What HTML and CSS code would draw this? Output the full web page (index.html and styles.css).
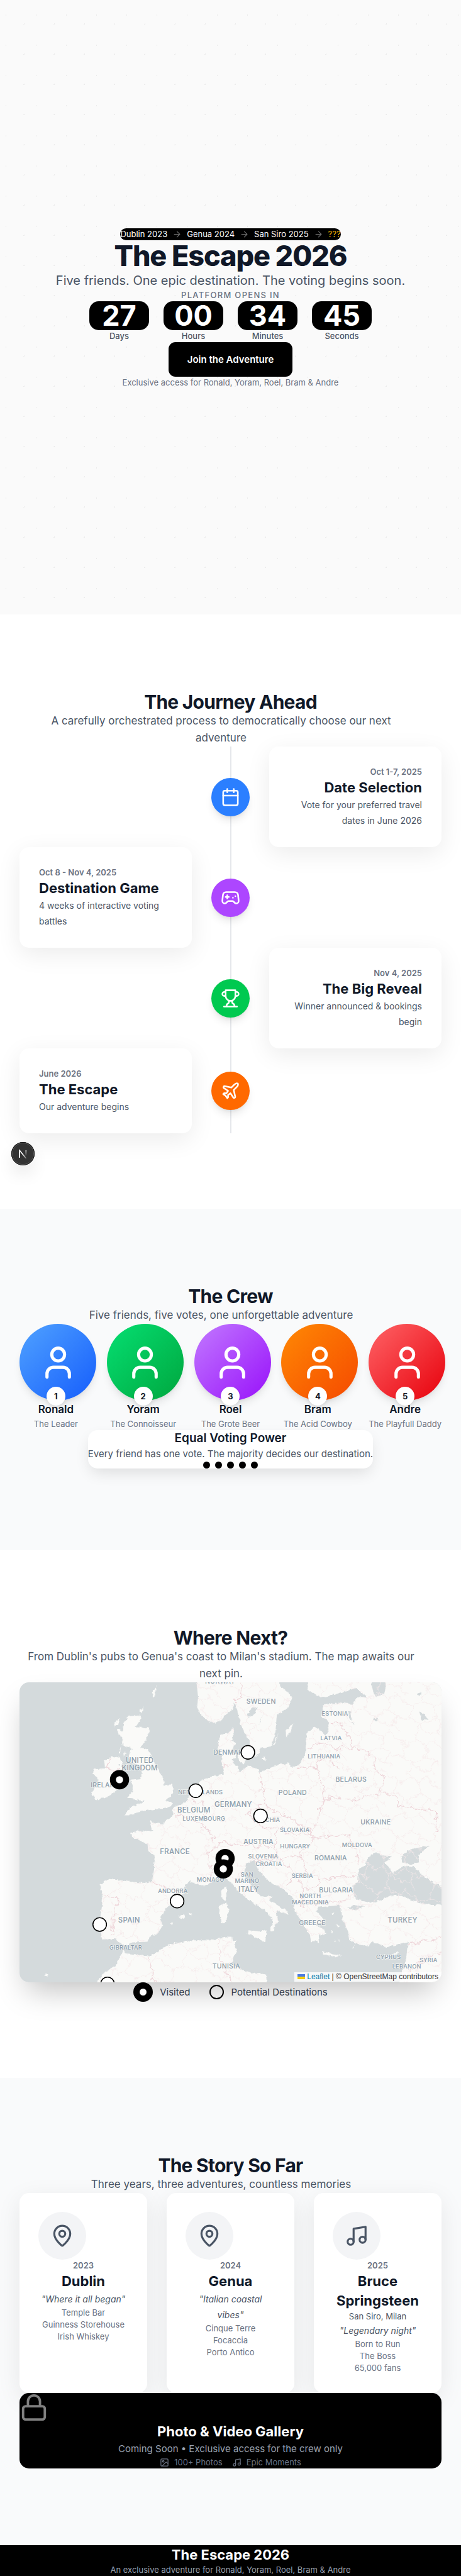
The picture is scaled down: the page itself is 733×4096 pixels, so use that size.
FILE: index.html
```html
<!DOCTYPE html>
<html lang="en">
<head>
<meta charset="utf-8">
<meta name="viewport" content="width=device-width, initial-scale=1">
<title>The Escape 2026</title>
<link rel="stylesheet" href="styles.css">
</head>
<body>
<svg class="sprite" aria-hidden="true">
  <symbol id="i-arrow" viewBox="0 0 24 24"><path d="M5 12h14M12 5l7 7-7 7"/></symbol>
  <symbol id="i-calendar" viewBox="0 0 24 24"><path d="M8 2v4M16 2v4M3 10h18"/><rect x="3" y="4" width="18" height="18" rx="2"/></symbol>
  <symbol id="i-game" viewBox="0 0 24 24"><path d="M6 11h4M8 9v4M15 12h.01M18 10h.01"/><path d="M17.32 5H6.68a4 4 0 0 0-3.978 3.59c-.006.052-.01.101-.017.152C2.604 9.416 2 14.456 2 16a3 3 0 0 0 3 3c1 0 1.5-.5 2-1l1.414-1.414A2 2 0 0 1 9.828 16h4.344a2 2 0 0 1 1.414.586L17 18c.5.5 1 1 2 1a3 3 0 0 0 3-3c0-1.545-.604-6.584-.685-7.258-.007-.05-.011-.1-.017-.151A4 4 0 0 0 17.32 5z"/></symbol>
  <symbol id="i-trophy" viewBox="0 0 24 24"><path d="M6 9H4.5a2.5 2.5 0 0 1 0-5H6M18 9h1.5a2.5 2.5 0 0 0 0-5H18M4 22h16M10 14.66V17c0 .55-.47.98-.97 1.21C7.85 18.75 7 20.24 7 22M14 14.66V17c0 .55.47.98.97 1.21C16.15 18.75 17 20.24 17 22M18 2H6v7a6 6 0 0 0 12 0V2Z"/></symbol>
  <symbol id="i-plane" viewBox="0 0 24 24"><path d="M17.8 19.2 16 11l3.5-3.5C21 6 21.5 4 21 3c-1-.5-3 0-4.5 1.5L13 8 4.8 6.2c-.5-.1-.9.1-1.1.5l-.3.5c-.2.5-.1 1 .3 1.3L9 12l-2 3H4l-1 1 3 2 2 3 1-1v-3l3-2 3.5 5.3c.3.4.8.5 1.3.3l.5-.2c.4-.3.6-.7.5-1.2z"/></symbol>
  <symbol id="i-user" viewBox="0 0 24 24"><path d="M19 21v-2a4 4 0 0 0-4-4H9a4 4 0 0 0-4 4v2"/><circle cx="12" cy="7" r="4"/></symbol>
  <symbol id="i-pin" viewBox="0 0 24 24"><path d="M20 10c0 4.993-5.539 10.193-7.399 11.799a1 1 0 0 1-1.202 0C9.539 20.193 4 14.993 4 10a8 8 0 0 1 16 0"/><circle cx="12" cy="10" r="3"/></symbol>
  <symbol id="i-music" viewBox="0 0 24 24"><path d="M9 18V5l12-2v13"/><circle cx="6" cy="18" r="3"/><circle cx="18" cy="16" r="3"/></symbol>
  <symbol id="i-lock" viewBox="0 0 24 24"><rect x="3" y="11" width="18" height="11" rx="2"/><path d="M7 11V7a5 5 0 0 1 10 0v4"/></symbol>
  <symbol id="i-image" viewBox="0 0 24 24"><rect x="3" y="3" width="18" height="18" rx="2"/><circle cx="9" cy="9" r="2"/><path d="m21 15-3.086-3.086a2 2 0 0 0-2.828 0L6 21"/></symbol>
</svg>

<main>
<section class="hero">
  <div class="trail">
    <span>Dublin 2023</span><svg class="icon trail-arrow"><use href="#i-arrow"/></svg>
    <span>Genua 2024</span><svg class="icon trail-arrow"><use href="#i-arrow"/></svg>
    <span>San Siro 2025</span><svg class="icon trail-arrow"><use href="#i-arrow"/></svg>
    <span class="trail-next">???</span>
  </div>
  <h1 class="hero-title">The Escape 2026</h1>
  <p class="hero-lead">Five friends. One epic destination. The voting begins soon.</p>
  <p class="overline">Platform opens in</p>
  <div class="countdown">
    <div class="unit"><div class="unit-value">27</div><div class="unit-label">Days</div></div>
    <div class="unit"><div class="unit-value">00</div><div class="unit-label">Hours</div></div>
    <div class="unit"><div class="unit-value">34</div><div class="unit-label">Minutes</div></div>
    <div class="unit"><div class="unit-value">45</div><div class="unit-label">Seconds</div></div>
  </div>
  <button class="cta" type="button">Join the Adventure</button>
  <p class="hero-note">Exclusive access for Ronald, Yoram, Roel, Bram &amp; Andre</p>
</section>

<section class="section journey">
  <h2 class="section-title">The Journey Ahead</h2>
  <p class="section-lead">A carefully orchestrated process to democratically choose our next <br>adventure</p>
  <ol class="timeline">
    <li class="step step-right">
      <div class="step-dot blue"><svg class="icon"><use href="#i-calendar"/></svg></div>
      <article class="step-card"><p class="step-date">Oct 1-7, 2025</p><h3 class="card-title">Date Selection</h3><p class="step-text">Vote for your preferred travel dates in June 2026</p></article>
    </li>
    <li class="step">
      <article class="step-card"><p class="step-date">Oct 8 - Nov 4, 2025</p><h3 class="card-title">Destination Game</h3><p class="step-text">4 weeks of interactive voting <br>battles</p></article>
      <div class="step-dot purple"><svg class="icon"><use href="#i-game"/></svg></div>
    </li>
    <li class="step step-right">
      <div class="step-dot green"><svg class="icon"><use href="#i-trophy"/></svg></div>
      <article class="step-card"><p class="step-date">Nov 4, 2025</p><h3 class="card-title">The Big Reveal</h3><p class="step-text">Winner announced &amp; bookings <br>begin</p></article>
    </li>
    <li class="step">
      <article class="step-card"><p class="step-date">June 2026</p><h3 class="card-title">The Escape</h3><p class="step-text">Our adventure begins</p></article>
      <div class="step-dot orange"><svg class="icon"><use href="#i-plane"/></svg></div>
    </li>
  </ol>
  <button class="dev-badge" type="button" aria-label="Open developer tools">
    <svg viewBox="0 0 40 40" width="37" height="37" fill="none">
      <defs>
        <linearGradient id="n-diag" gradientUnits="userSpaceOnUse" x1="20" y1="20" x2="27" y2="28"><stop stop-color="#fff"/><stop offset=".7" stop-color="#fff" stop-opacity=".5"/><stop offset="1" stop-color="#fff" stop-opacity="0"/></linearGradient>
        <linearGradient id="n-stem" gradientUnits="userSpaceOnUse" x1="25" y1="13" x2="25" y2="24"><stop stop-color="#fff"/><stop offset="1" stop-color="#fff" stop-opacity="0"/></linearGradient>
      </defs>
      <path d="M14.3 26V14.2l11.8 14.6" stroke="url(#n-diag)" stroke-width="1.7"/>
      <path d="M14.3 27V14" stroke="#fff" stroke-width="1.7"/>
      <path d="M25.2 14v11" stroke="url(#n-stem)" stroke-width="1.7"/>
    </svg>
  </button>
</section>

<section class="section crew">
  <h2 class="section-title">The Crew</h2>
  <p class="section-lead">Five friends, five votes, one unforgettable adventure</p>
  <ul class="crew-grid">
    <li class="member"><div class="avatar"><div class="avatar-disc g-blue"><svg class="icon"><use href="#i-user"/></svg></div><span class="rank">1</span></div><h3 class="member-name">Ronald</h3><p class="member-role">The Leader</p></li>
    <li class="member"><div class="avatar"><div class="avatar-disc g-green"><svg class="icon"><use href="#i-user"/></svg></div><span class="rank">2</span></div><h3 class="member-name">Yoram</h3><p class="member-role">The Connoisseur</p></li>
    <li class="member"><div class="avatar"><div class="avatar-disc g-purple"><svg class="icon"><use href="#i-user"/></svg></div><span class="rank">3</span></div><h3 class="member-name">Roel</h3><p class="member-role">The Grote Beer</p></li>
    <li class="member"><div class="avatar"><div class="avatar-disc g-orange"><svg class="icon"><use href="#i-user"/></svg></div><span class="rank">4</span></div><h3 class="member-name">Bram</h3><p class="member-role">The Acid Cowboy</p></li>
    <li class="member"><div class="avatar"><div class="avatar-disc g-red"><svg class="icon"><use href="#i-user"/></svg></div><span class="rank">5</span></div><h3 class="member-name">Andre</h3><p class="member-role">The Playfull Daddy</p></li>
  </ul>
  <div class="power">
    <h3 class="power-title">Equal Voting Power</h3>
    <p class="power-text">Every friend has one vote. The majority decides our destination.</p>
    <div class="power-dots"><i></i><i></i><i></i><i></i><i></i></div>
  </div>
</section>

<section class="section where">
  <h2 class="section-title">Where Next?</h2>
  <p class="section-lead">From Dublin's pubs to Genua's coast to Milan's stadium. The map awaits our <br>next pin.</p>
  <div class="map">
    <svg class="map-canvas" viewBox="96 335 2112 1500" preserveAspectRatio="xMidYMid slice" role="img" aria-label="Map of Europe">
      <defs>
        <filter id="rough" x="-5%" y="-5%" width="110%" height="110%"><feTurbulence type="fractalNoise" baseFrequency=".06" numOctaves="3" seed="4"/><feDisplacementMap in="SourceGraphic" scale="16" xChannelSelector="R" yChannelSelector="G"/></filter>
        <filter id="rough-lines" x="-5%" y="-5%" width="110%" height="110%"><feTurbulence type="fractalNoise" baseFrequency=".03" numOctaves="4" seed="9"/><feDisplacementMap in="SourceGraphic" scale="46" xChannelSelector="R" yChannelSelector="G"/></filter>
        <pattern id="regions" width="230" height="190" patternUnits="userSpaceOnUse" patternTransform="rotate(11)">
          <path d="M0 40 50 55 90 20 80 0M90 20 150 40 180 10 230 40M50 55 40 110 0 130M40 110 95 140 80 190M150 40 160 95 95 140M160 95 205 110 230 130M205 110 190 160 230 190M190 160 130 165 95 140M180 10 180 0"/>
        </pattern>
        <clipPath id="land-clip">
          <path d="M980 335 990 410 985 460 1005 495 1035 528 1065 538 1095 530 1120 505 1165 468 1172 432 1190 490 1203 545 1225 590 1246 628 1250 655 1235 690 1275 705 1295 690 1300 665 1355 655 1375 600 1380 545 1383 500 1440 462 1458 410 1430 375 1400 355 1398 335Z"/>
          <path d="M1540 335V372L1580 400 1600 410 1660 400 1740 375 1785 365 1805 385 1840 410 1805 405 1780 415 1765 445 1690 435 1615 450 1610 470 1625 482 1600 508 1640 522 1642 580 1625 600 1595 570 1570 558 1540 580 1530 610 1528 660 1525 700 1510 725 1485 755 1460 762 1440 738 1400 745 1360 760 1295 788 1290 770 1240 752 1200 785 1188 762 1168 735 1150 700 1165 665 1180 640 1160 625 1170 575 1165 560 1140 590 1105 597 1090 630 1090 665 1110 705 1105 730 1118 770 1118 795 1055 805 1000 830 975 850 955 890 930 935 865 960 862 1005 820 1032 815 1043 770 1040 747 1024 755 1045 762 1075 730 1080 690 1078 650 1088 660 1110 700 1125 735 1145 742 1180 772 1200 770 1270 760 1330 720 1338 650 1332 560 1320 540 1318 498 1345 512 1405 510 1450 500 1515 485 1550 505 1580 508 1620 580 1618 600 1645 640 1648 665 1635 735 1632 755 1600 783 1597 815 1550 800 1520 830 1465 870 1430 920 1390 920 1360 945 1330 985 1345 1020 1352 1060 1335 1100 1305 1130 1315 1160 1340 1190 1380 1240 1420 1285 1450 1325 1475 1355 1510 1365 1540 1345 1580 1365 1575 1375 1545 1395 1530 1380 1500 1385 1475 1438 1498 1437 1480 1380 1445 1345 1425 1360 1405 1305 1405 1270 1370 1240 1330 1220 1290 1230 1240 1270 1225 1285 1255 1300 1280 1330 1320 1380 1350 1420 1370 1470 1420 1470 1470 1495 1510 1525 1560 1550 1600 1555 1635 1580 1625 1595 1640 1590 1600 1630 1590 1610 1565 1580 1550 1590 1535 1625 1545 1610 1510 1580 1480 1590 1460 1640 1455 1695 1450 1705 1470 1712 1520 1725 1550 1740 1580 1745 1620 1790 1645 1840 1655 1860 1630 1930 1660 2000 1645 2040 1635 2035 1670 2030 1720 2010 1785 1990 1850H2230V320Z"/>
          <path d="M485 1850 510 1795 575 1755 600 1710 615 1675 630 1690 680 1695 745 1705 790 1680 850 1645 960 1625 1050 1625 1130 1610 1160 1610 1165 1630 1185 1620 1170 1650 1185 1680 1165 1715 1160 1740 1200 1770 1265 1790 1330 1795 1335 1850Z"/>
        </clipPath>
      </defs>
      <rect class="sea" x="60" y="300" width="2200" height="1600"/>
      <g class="land" filter="url(#rough)">
        <path d="M980 315 990 410 985 460 1005 495 1035 528 1065 538 1095 530 1120 505 1165 468 1172 432 1190 490 1203 545 1225 590 1246 628 1250 655 1235 690 1275 705 1295 690 1300 665 1355 655 1375 600 1380 545 1383 500 1440 462 1458 410 1430 375 1400 355 1398 315Z"/>
        <path d="M1540 315V372L1580 400 1600 410 1660 400 1740 375 1785 365 1805 385 1840 410 1805 405 1780 415 1765 445 1690 435 1615 450 1610 470 1625 482 1600 508 1640 522 1642 580 1625 600 1595 570 1570 558 1540 580 1530 610 1528 660 1525 700 1510 725 1485 755 1460 762 1440 738 1400 745 1360 760 1295 788 1290 770 1240 752 1200 785 1188 762 1168 735 1150 700 1165 665 1180 640 1160 625 1170 575 1165 560 1140 590 1105 597 1090 630 1090 665 1110 705 1105 730 1118 770 1118 795 1055 805 1000 830 975 850 955 890 930 935 865 960 862 1005 820 1032 815 1043 770 1040 747 1024 755 1045 762 1075 730 1080 690 1078 650 1088 660 1110 700 1125 735 1145 742 1180 772 1200 770 1270 760 1330 720 1338 650 1332 560 1320 540 1318 498 1345 512 1405 510 1450 500 1515 485 1550 505 1580 508 1620 580 1618 600 1645 640 1648 665 1635 735 1632 755 1600 783 1597 815 1550 800 1520 830 1465 870 1430 920 1390 920 1360 945 1330 985 1345 1020 1352 1060 1335 1100 1305 1130 1315 1160 1340 1190 1380 1240 1420 1285 1450 1325 1475 1355 1510 1365 1540 1345 1580 1365 1575 1375 1545 1395 1530 1380 1500 1385 1475 1438 1498 1437 1480 1380 1445 1345 1425 1360 1405 1305 1405 1270 1370 1240 1330 1220 1290 1230 1240 1270 1225 1285 1255 1300 1280 1330 1320 1380 1350 1420 1370 1470 1420 1470 1470 1495 1510 1525 1560 1550 1600 1555 1635 1580 1625 1595 1640 1590 1600 1630 1590 1610 1565 1580 1550 1590 1535 1625 1545 1610 1510 1580 1480 1590 1460 1640 1455 1695 1450 1705 1470 1712 1520 1725 1550 1740 1580 1745 1620 1790 1645 1840 1655 1860 1630 1930 1660 2000 1645 2040 1635 2035 1670 2030 1720 2010 1785 1990 1860H2240V310Z"/>
        <path d="M470 1860 510 1795 575 1755 600 1710 615 1675 630 1690 680 1695 745 1705 790 1680 850 1645 960 1625 1050 1625 1130 1610 1160 1610 1165 1630 1185 1620 1170 1650 1185 1680 1165 1715 1160 1740 1200 1770 1265 1790 1330 1795 1335 1860Z"/>
        <path d="M640 505 705 500 700 530 675 560 745 562 748 580 720 640 700 660 740 672 757 710 785 760 808 800 822 832 815 850 860 845 868 870 850 910 825 925 858 935 855 955 800 968 735 975 690 985 640 1000 620 1000 650 965 720 930 680 920 635 910 665 880 660 850 650 825 700 820 710 790 705 760 690 745 650 735 640 700 660 665 615 650 610 610 590 590 615 575 620 540Z"/>
        <path d="M520 730 560 708 600 715 612 745 600 800 600 860 550 900 480 925 457 895 480 850 490 820 465 790 470 770 525 765Z"/>
        <path d="M570 545 597 512 590 540 575 557ZM585 572 605 570 600 600ZM768 375 782 350 770 412 756 385ZM698 478 718 455 708 490ZM592 690 604 655 600 690ZM617 705 624 680 632 690Z"/>
        <path d="M1430 608 1428 575 1466 540 1450 590ZM1362 652 1392 585 1375 640ZM1308 712 1325 710 1328 724 1312 722ZM1150 690 1175 690 1178 715 1155 720ZM1190 700 1225 680 1235 720 1215 745 1195 730Z"/>
        <path d="M1130 1355 1135 1385 1125 1427 1108 1408 1105 1380ZM1090 1455 1130 1435 1143 1470 1130 1532 1105 1540 1098 1490ZM890 1505 922 1494 925 1510 908 1522ZM942 1492 958 1490 955 1500ZM855 1540 865 1534 860 1548ZM222 1795 238 1796 232 1804Z"/>
        <path d="M1237 1590 1242 1575 1300 1580 1332 1572 1326 1635 1280 1612ZM1613 1682 1660 1692 1706 1700 1680 1710 1615 1693ZM1757 1665 1775 1645 1770 1665ZM1920 1705 1992 1680 1960 1710 1935 1718ZM1590 1570 1632 1590 1620 1600ZM1680 1545 1700 1550 1690 1560ZM1655 1575 1665 1590 1655 1590ZM1690 1620 1700 1628 1690 1630ZM1672 1615 1680 1630 1672 1632ZM1655 1490 1668 1490 1662 1500Z"/>
      </g>
      <g class="sea" filter="url(#rough)">
        <path d="M2240 1365 2170 1340 2125 1310 2070 1260 2020 1252 1965 1288 1925 1235 1960 1205 1900 1200 1875 1185 1830 1225 1825 1250 1790 1270 1785 1340 1765 1350 1765 1390 1780 1420 1840 1435 1880 1435 1950 1402 2005 1400 2070 1430 2160 1448 2240 1445Z"/>
        <path d="M2005 1205 2050 1170 2145 1152 2090 1200 2095 1235 2050 1245 2010 1235ZM1735 1465 1765 1448 1822 1456 1780 1472ZM1850 310H1925L1930 355 1920 390 1880 412 1865 380ZM1742 480 1755 480 1758 520 1745 515ZM1755 530 1768 535 1768 548ZM2095 480 2125 495 2140 522 2110 525ZM2088 385 2105 388 2100 402 2085 398ZM1868 515 1890 512 1885 530 1870 528ZM1238 490 1265 462 1292 458 1265 500 1240 512ZM1293 550 1318 490 1300 540ZM588 742 597 745 592 755Z"/>
      </g>
      <g clip-path="url(#land-clip)">
        <g filter="url(#rough-lines)">
          <rect x="400" y="300" width="1850" height="1600" fill="url(#regions)"/>
          <path class="border" d="M1200 310 1210 420 1172 432M1540 665 1600 640 1680 665 1765 660 1700 540 1650 545M1765 660 1865 700 1875 770 1920 810 1890 890 1975 900M1480 760 1580 765 1610 690M1580 765 1625 880 1615 910 1750 925 1890 890M1610 690 1690 770M1975 900 1990 950 2180 985 2180 1090M1300 788 1315 950 1230 990 1300 1060 1390 1060 1430 1090M1315 950 1440 1010 1560 1090 1620 910M1430 1090 1560 1090 1570 1110 1740 1095 1780 1190 1790 1245M1570 1110 1500 1200 1530 1290 1600 1315 1780 1305M1390 1060 1370 1160 1200 1150 1110 1130 1040 1190 1060 1330M1370 1160 1400 1220 1500 1200M1270 1225 1400 1220 1480 1300 1440 1350M1480 1300 1520 1370 1600 1340 1590 1310M1520 1370 1500 1450 1700 1430 1760 1400M865 990 940 1010 1020 1060 1070 1100 1060 1140M960 930 1020 940 1025 1030M1105 750 1150 750M765 1335 850 1370 930 1375M515 1400 590 1420 575 1480 560 1600M1090 1620 1100 1710 1130 1780 1160 1850M745 1710 760 1790 775 1850M2040 1640 2120 1630 2240 1610M2030 1780 2150 1700 2240 1690"/>
        </g>
      </g>
      <path class="border" filter="url(#rough)" d="M555 715 530 760 570 780 600 765"/>
      <g class="labels">
        <g class="lg" text-anchor="middle">
          <text x="698" y="738">UNITED</text><text x="698" y="776">KINGDOM</text><text x="969" y="986">BELGIUM</text><text x="1166" y="958">GERMANY</text><text x="874" y="1195">FRANCE</text><text x="645" y="1535">SPAIN</text><text x="1243" y="1383">ITALY</text><text x="2012" y="1536">TURKEY</text>
        </g>
        <g class="md" text-anchor="middle">
          <text x="1100" y="341">NORWAY</text><text x="1305" y="442">SWEDEN</text><text x="1755" y="831">BELARUS</text><text x="1463" y="899">POLAND</text><text x="1878" y="1046">UKRAINE</text><text x="1292" y="1143">AUSTRIA</text><text x="1653" y="1225">ROMANIA</text><text x="1680" y="1386">BULGARIA</text><text x="1561" y="1548">GREECE</text><text x="1131" y="1767">TUNISIA</text><text x="1152" y="697">DENMARK</text><text x="526" y="860">IRELAND</text>
        </g>
        <g class="sm" text-anchor="middle">
          <text x="1674" y="503">ESTONIA</text><text x="1655" y="624">LATVIA</text><text x="1620" y="717">LITHUANIA</text><text x="1002" y="896">NETHERLANDS</text><text x="1019" y="1028">LUXEMBOURG</text><text x="1333" y="1032">CZECHIA</text><text x="1473" y="1084">SLOVAKIA</text><text x="1475" y="1164">HUNGARY</text><text x="1785" y="1158">MOLDOVA</text><text x="1315" y="1217">SLOVENIA</text><text x="1344" y="1253">CROATIA</text><text x="1235" y="1307">SAN</text><text x="1235" y="1337">MARINO</text><text x="1511" y="1313">SERBIA</text><text x="1551" y="1415">NORTH</text><text x="1551" y="1445">MACEDONIA</text><text x="1052" y="1331">MONACO</text><text x="864" y="1387">ANDORRA</text><text x="628" y="1670">GIBRALTAR</text><text x="1942" y="1718">CYPRUS</text><text x="2142" y="1734">SYRIA</text><text x="2033" y="1765">LEBANON</text>
        </g>
      </g>
      <g class="pin-open"><circle cx="978" cy="877" r="34"/><circle cx="1239" cy="685" r="34"/><circle cx="1302" cy="1003" r="34"/><circle cx="885" cy="1429" r="34"/><circle cx="498" cy="1546" r="34"/><circle cx="537" cy="1843" r="34"/></g>
      <g class="pin-full"><circle cx="597" cy="822" r="33"/><circle cx="1125" cy="1216" r="33"/><circle cx="1116" cy="1268" r="33"/></g>
    </svg>
    <div class="attribution"><svg class="flag" viewBox="0 0 12 8"><path fill="#4C7BE1" d="M0 0h12v4H0z"/><path fill="#FFD500" d="M0 4h12v3H0z"/><path fill="#E0BC00" d="M0 7h12v1H0z"/></svg> <a href="https://leafletjs.com">Leaflet</a> | © OpenStreetMap contributors</div>
  </div>
  <div class="legend">
    <div class="legend-item"><span class="key-full"></span>Visited</div>
    <div class="legend-item"><span class="key-open"></span>Potential Destinations</div>
  </div>
</section>

<section class="section story">
  <h2 class="section-title">The Story So Far</h2>
  <p class="section-lead">Three years, three adventures, countless memories</p>
  <div class="story-grid">
    <article class="story-card">
      <div class="story-icon"><svg class="icon"><use href="#i-pin"/></svg></div>
      <p class="story-year">2023</p><h3 class="card-title">Dublin</h3><p class="story-quote">"Where it all began"</p>
      <ul class="story-list"><li>Temple Bar</li><li>Guinness Storehouse</li><li>Irish Whiskey</li></ul>
    </article>
    <article class="story-card">
      <div class="story-icon"><svg class="icon"><use href="#i-pin"/></svg></div>
      <p class="story-year">2024</p><h3 class="card-title">Genua</h3><p class="story-quote">"Italian coastal <br>vibes"</p>
      <ul class="story-list"><li>Cinque Terre</li><li>Focaccia</li><li>Porto Antico</li></ul>
    </article>
    <article class="story-card">
      <div class="story-icon"><svg class="icon"><use href="#i-music"/></svg></div>
      <p class="story-year">2025</p><h3 class="card-title">Bruce Springsteen</h3><p class="story-place">San Siro, Milan</p><p class="story-quote">"Legendary night"</p>
      <ul class="story-list"><li>Born to Run</li><li>The Boss</li><li>65,000 fans</li></ul>
    </article>
  </div>
  <div class="gallery">
    <svg class="icon gallery-lock"><use href="#i-lock"/></svg>
    <h3 class="card-title">Photo &amp; Video Gallery</h3>
    <p class="gallery-text">Coming Soon • Exclusive access for the crew only</p>
    <div class="gallery-meta">
      <span class="meta-item"><svg class="icon"><use href="#i-image"/></svg>100+ Photos</span>
      <span class="meta-item"><svg class="icon"><use href="#i-music"/></svg>Epic Moments</span>
    </div>
  </div>
</section>
</main>

<footer class="footer">
  <p class="card-title">The Escape 2026</p>
  <p class="footer-text">An exclusive adventure for Ronald, Yoram, Roel, Bram &amp; Andre</p>
</footer>
</body>
</html>
```

FILE: styles.css
```css
:root {
  --ink: #101828;
  --gray-700: #364153;
  --gray-600: #4a5565;
  --gray-500: #6a7282;
  --gray-400: #99a1af;
  --soft: #f9fafb;
}

* { box-sizing: border-box; margin: 0; padding: 0; }

body {
  font-family: Inter, "Liberation Sans", sans-serif;
  font-size: 15px;
  line-height: 25px;
  color: var(--ink);
  background: #fff;
}

ul, ol { list-style: none; }
button { font: inherit; border: 0; cursor: pointer; }

.sprite { display: none; }

.icon {
  display: block;
  fill: none;
  stroke: currentColor;
  stroke-width: 2;
  stroke-linecap: round;
  stroke-linejoin: round;
}

/* Hero */
.hero {
  display: flex;
  flex-direction: column;
  align-items: center;
  justify-content: center;
  min-height: 977px;
  padding-top: 4px;
  text-align: center;
  background-color: #fafafa;
  background-image:
    radial-gradient(circle at 20% 50%, #ebebeb 1px, transparent 1px),
    radial-gradient(circle at 80% 80%, #ebebeb 1px, transparent 1px);
  background-size: 48px 48px;
}

.trail {
  display: flex;
  align-items: center;
  gap: 8px;
  border-radius: 10px;
  background: #000;
  color: #fff;
  font-size: 13px;
  line-height: 19px;
}
.trail-arrow { width: 15px; height: 15px; color: #6a6a6a; }
.trail-next { color: #f0b100; }

.hero-title {
  font-size: 45px;
  line-height: 50px;
  font-weight: 800;
  letter-spacing: -0.025em;
}
.hero-lead { font-size: 20px; line-height: 28px; color: var(--gray-600); }
.overline {
  font-size: 13px;
  line-height: 19px;
  font-weight: 500;
  letter-spacing: 0.1em;
  text-transform: uppercase;
  color: var(--gray-500);
}

.countdown { display: flex; gap: 23px; }
.unit-value {
  min-width: 95px;
  border-radius: 15px;
  background: #000;
  color: #fff;
  font-size: 45px;
  line-height: 46px;
  font-weight: 700;
}
.unit-label { font-size: 13px; line-height: 19px; font-weight: 500; color: var(--gray-600); }

.cta {
  padding: 15px 30px;
  border-radius: 11px;
  background: #000;
  color: #fff;
  font-weight: 600;
}
.hero-note { font-size: 13px; line-height: 19px; color: var(--gray-500); }

/* Sections */
.section { position: relative; padding: 122px 31px; background: #fff; }
.section-title {
  font-size: 30px;
  line-height: 34px;
  font-weight: 700;
  letter-spacing: -0.025em;
  text-align: center;
}
.section-lead {
  max-width: 641px;
  font-size: 17px;
  line-height: 27px;
  text-align: center;
  color: var(--gray-600);
}
.card-title { font-size: 22px; line-height: 30px; font-weight: 700; }

/* Timeline */
.journey { padding-bottom: 120px; }
.timeline {
  background: linear-gradient(#e5e7eb, #e5e7eb) center / 2px 100% no-repeat;
}
.step {
  display: grid;
  grid-template-columns: 1fr 61px 1fr;
  gap: 31px;
  align-items: center;
}
.step-dot {
  grid-column: 2;
  display: grid;
  place-items: center;
  height: 61px;
  border-radius: 50%;
  color: #fff;
  box-shadow: 0 9px 14px -3px rgb(0 0 0 / 10%), 0 4px 6px -4px rgb(0 0 0 / 10%);
}
.step-dot .icon { width: 31px; height: 31px; }
.step-card {
  padding: 31px 31px 30px;
  border-radius: 15px;
  background: #fff;
  box-shadow: 0 10px 38px rgb(0 0 0 / 8%);
}
.step-right .step-card { grid-column: 3; text-align: right; }
.step-date { font-size: 13px; line-height: 19px; font-weight: 600; color: var(--gray-500); }
.step-text { font-size: 14px; color: var(--gray-600); }

.blue { background: #2b7fff; }
.purple { background: #ad46ff; }
.green { background: #00c950; }
.orange { background: #ff6900; }

.dev-badge {
  position: absolute;
  left: 18px;
  bottom: 69px;
  width: 37px;
  height: 37px;
  border-radius: 50%;
  background: #333;
  box-shadow: inset 0 0 0 1px #171717, inset 0 0 0 2px #555, 0 15px 30px -8px rgb(0 0 0 / 24%);
}
.dev-badge svg { display: block; }

/* Crew */
.crew { padding-bottom: 130px; background: var(--soft); }
.crew-grid { display: grid; grid-template-columns: repeat(5, 1fr); gap: 23px; }
.member { min-width: 0; text-align: center; white-space: nowrap; }
.avatar { position: relative; }
.avatar-disc {
  display: grid;
  place-items: center;
  width: 122px;
  height: 122px;
  border-radius: 50%;
  color: #fff;
  box-shadow: 0 9px 14px -3px rgb(0 0 0 / 10%), 0 4px 6px -4px rgb(0 0 0 / 10%);
}
.avatar-disc .icon { width: 61px; height: 61px; }
.g-blue { background: linear-gradient(135deg, #50a2ff, #155dfc); }
.g-green { background: linear-gradient(135deg, #05df72, #00a63e); }
.g-purple { background: linear-gradient(135deg, #c27aff, #9810fa); }
.g-orange { background: linear-gradient(135deg, #ff8904, #f54900); }
.g-red { background: linear-gradient(135deg, #ff6467, #e7000b); }
.rank {
  position: absolute;
  left: 50%;
  bottom: -8px;
  width: 30px;
  height: 30px;
  margin-left: -15px;
  border-radius: 50%;
  background: #fff;
  font-size: 13px;
  line-height: 31px;
  font-weight: 700;
  box-shadow: 0 4px 6px -1px rgb(0 0 0 / 10%);
}
.member-name { font-size: 17px; line-height: 28px; font-weight: 600; }
.member-role { font-size: 13px; line-height: 19px; color: var(--gray-500); }

.power {
  width: fit-content;
  margin: 0 auto;
  border-radius: 15px;
  background: #fff;
  text-align: center;
  box-shadow: 0 10px 24px -4px rgb(0 0 0 / 12%);
}
.power-title { font-size: 19px; line-height: 25px; font-weight: 600; }
.power-text { color: var(--gray-600); }
.power-dots { display: flex; justify-content: center; gap: 8px; }
.power-dots i { width: 11px; height: 11px; border-radius: 50%; background: #000; }

/* Map */
.where { padding-bottom: 121px; }
.map {
  position: relative;
  height: 477px;
  border-radius: 15px;
  box-shadow: 0 24px 48px -12px rgb(0 0 0 / 25%);
}
.map-canvas { display: block; width: 100%; height: 100%; border-radius: 15px; }
.sea { fill: #d4dadc; }
.land { fill: #fafaf8; }
#regions path { fill: none; stroke: #f6e9ea; stroke-width: 3; }
.border { fill: none; stroke: #eed6da; stroke-width: 4; }
.labels {
  fill: #8c9dab;
  font-weight: 500;
  stroke: #fafaf8;
  stroke-width: 5;
  stroke-opacity: 0.7;
  paint-order: stroke;
  letter-spacing: 0.05em;
}
.lg { font-size: 36px; }
.md { font-size: 33px; }
.sm { font-size: 29px; }
.pin-open { fill: #fff; stroke: #000; stroke-width: 5; }
.pin-full { fill: #fff; stroke: #000; stroke-width: 30; }

.attribution {
  position: absolute;
  right: 0;
  bottom: 1px;
  padding: 0 5px;
  border-bottom-right-radius: 15px;
  background: rgb(255 255 255 / 80%);
  color: #333;
  font-family: "Liberation Sans", Arial, sans-serif;
  font-size: 12px;
  line-height: 15px;
}
.attribution a { color: #0078a8; text-decoration: none; }
.flag { width: 12px; height: 8px; }

.legend { display: flex; justify-content: center; gap: 31px; color: var(--gray-700); }
.legend-item { display: flex; align-items: center; gap: 11px; min-height: 31px; }
.key-full { position: relative; width: 31px; height: 31px; border: 10px solid #000; border-radius: 50%; background: #fff; }
.key-open { width: 23px; height: 23px; border: 2px solid #000; border-radius: 50%; background: #fff; }

/* Story */
.story { background: var(--soft); }
.story-grid { display: grid; grid-template-columns: repeat(3, 1fr); gap: 31px; }
.story-card {
  padding: 30px;
  border-radius: 15px;
  background: #fff;
  text-align: center;
  box-shadow: 0 10px 38px rgb(0 0 0 / 8%);
}
.story-card .card-title { line-height: 31px; }
.story-icon {
  display: grid;
  place-items: center;
  width: 76px;
  height: 76px;
  border-radius: 50%;
  background: #f3f4f6;
  color: var(--gray-600);
}
.story-icon .icon { width: 38px; height: 38px; }
.story-year { font-size: 13px; line-height: 19px; font-weight: 600; color: var(--gray-500); }
.story-place { font-size: 13px; line-height: 19px; color: var(--gray-600); }
.story-quote { font-size: 14px; font-style: italic; color: var(--gray-600); }
.story-list { font-size: 13px; line-height: 19px; color: var(--gray-500); white-space: nowrap; }

.gallery {
  position: relative;
  border-radius: 15px;
  background: #000;
  color: #fff;
  text-align: center;
}
.gallery-lock { width: 46px; height: 46px; color: #808080; }
.gallery-text { color: var(--gray-400); }
.gallery-meta {
  display: flex;
  justify-content: center;
  gap: 15px;
  font-size: 13px;
  line-height: 19px;
  color: var(--gray-500);
}
.meta-item { display: flex; align-items: center; gap: 8px; }
.meta-item .icon { width: 15px; height: 15px; }

.footer { background: #000; color: #fff; text-align: center; }
.footer-text { font-size: 13px; line-height: 19px; color: var(--gray-400); }
```
